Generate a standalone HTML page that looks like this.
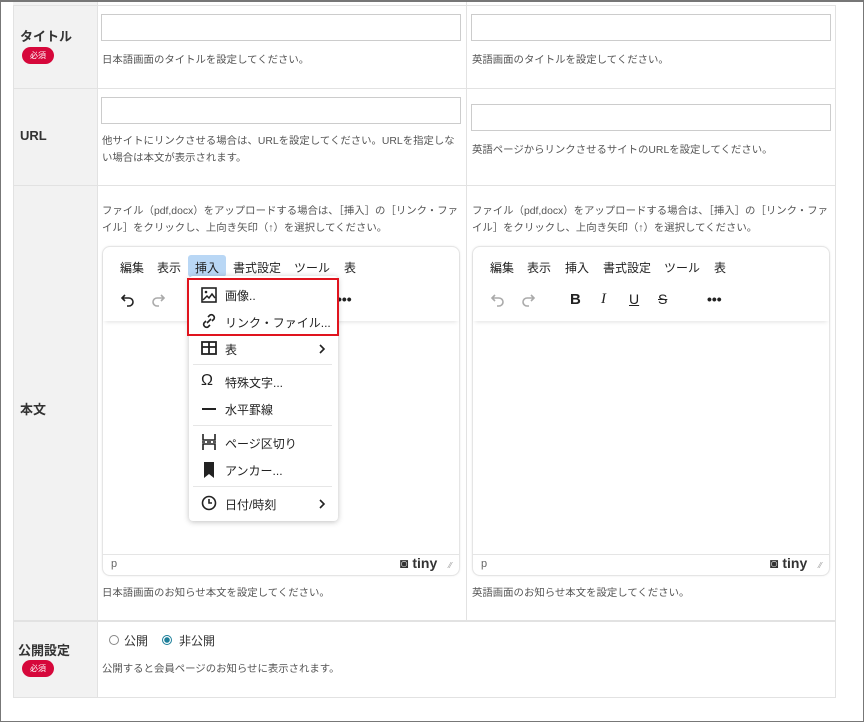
<!DOCTYPE html>
<html><head><meta charset="utf-8"><style>
*{box-sizing:border-box;margin:0;padding:0}
body{width:864px;height:722px;background:#fff;font-family:"Liberation Sans","Noto Sans CJK JP",sans-serif;position:relative;overflow:hidden;color:#333}
.frame{position:absolute;left:0;top:0;width:864px;height:722px;border:1px solid #777;border-top:2px solid #777}
.a{position:absolute}
.lab{background:#f2f2f2}
.hl{position:absolute;height:1px;background:#e2e2e2}
.vl{position:absolute;width:1px;background:#e2e2e2}
.lt{position:absolute;font-size:13px;font-weight:bold;color:#333}
.req{position:absolute;width:32px;height:17px;border-radius:9px;background:#d6083b;color:#fff;font-size:8px;text-align:center;line-height:17px}
.inp{position:absolute;border:1px solid #ccc;background:#fff;height:27px}
.hint{position:absolute;font-size:10.4px;color:#555;line-height:17px}
.ed{position:absolute;border:1px solid #e5e5e5;border-radius:8px;background:#fff;width:358px;height:330px;box-shadow:0 0 2px rgba(0,0,0,.08)}
.menu{position:absolute;top:12px;left:0;font-size:12px;color:#222;white-space:nowrap}
.menu span{position:absolute;top:0}
.tb{position:absolute;left:0;top:0;width:100%;height:74px;box-shadow:0 3px 4px -2px rgba(0,0,0,.12);border-radius:8px 8px 0 0}
.sb{position:absolute;left:0;bottom:0;width:100%;height:21px;border-top:1px solid #e5e5e5;font-size:11px;color:#666}
.dd{position:absolute;left:189px;top:276px;width:149px;height:245px;background:#fff;border-radius:4px;box-shadow:0 1px 6px rgba(0,0,0,.25)}
.it{position:absolute;left:36px;font-size:12px;color:#222}
.sep{position:absolute;left:4px;width:139px;height:1px;background:#e6e6e6}
</style></head><body>
<div class="a lab" style="left:13px;top:5px;width:84px;height:692px"></div>
<div class="hl" style="left:13px;top:5px;width:823px"></div>
<div class="hl" style="left:13px;top:88px;width:823px"></div>
<div class="hl" style="left:13px;top:185px;width:823px"></div>
<div class="hl" style="left:13px;top:620px;width:823px;height:2px"></div>
<div class="hl" style="left:13px;top:697px;width:823px"></div>
<div class="vl" style="left:13px;top:5px;height:693px"></div>
<div class="vl" style="left:97px;top:5px;height:693px"></div>
<div class="vl" style="left:466px;top:5px;height:616px"></div>
<div class="vl" style="left:835px;top:5px;height:693px"></div>
<div class="a" style="left:13px;top:0;width:823px;height:5px;background:#fff"></div>
<div class="a lab" style="left:13px;top:0;width:84px;height:5px"></div>
<div class="vl" style="left:97px;top:0;height:6px"></div><div class="vl" style="left:466px;top:0;height:6px"></div>

<div class="lt" style="left:20px;top:26px">タイトル</div>
<div class="req" style="left:22px;top:47px">必須</div>
<div class="lt" style="left:20px;top:128px">URL</div>
<div class="lt" style="left:20px;top:399px">本文</div>
<div class="lt" style="left:18px;top:640px">公開設定</div>
<div class="req" style="left:22px;top:660px">必須</div>

<div class="inp" style="left:101px;top:14px;width:360px"></div>
<div class="inp" style="left:471px;top:14px;width:360px"></div>
<div class="hint" style="left:102px;top:52px">日本語画面のタイトルを設定してください。</div>
<div class="hint" style="left:472px;top:52px">英語画面のタイトルを設定してください。</div>
<div class="inp" style="left:101px;top:97px;width:360px"></div>
<div class="inp" style="left:471px;top:104px;width:360px"></div>
<div class="hint" style="left:102px;top:133px;width:358px">他サイトにリンクさせる場合は、URLを設定してください。URLを指定しない場合は本文が表示されます。</div>
<div class="hint" style="left:472px;top:142px">英語ページからリンクさせるサイトのURLを設定してください。</div>
<div class="hint" style="left:102px;top:203px;width:360px">ファイル（pdf,docx）をアップロードする場合は、［挿入］の［リンク・ファイル］をクリックし、上向き矢印（↑）を選択してください。</div>
<div class="hint" style="left:472px;top:203px;width:360px">ファイル（pdf,docx）をアップロードする場合は、［挿入］の［リンク・ファイル］をクリックし、上向き矢印（↑）を選択してください。</div>

<div class="ed" style="left:102px;top:246px">
 <div class="tb"></div>
 <div class="a" style="left:85px;top:8px;width:38px;height:22px;background:#b9d7f5;border-radius:3px"></div>
 <div class="menu"><span style="left:17px">編集</span><span style="left:54px">表示</span><span style="left:92px">挿入</span><span style="left:130px">書式設定</span><span style="left:191px">ツール</span><span style="left:241px">表</span></div>
 <svg class="a" style="left:16px;top:44px" width="18" height="18" viewBox="0 0 18 18"><path d="M6 4L3 7l3 3M3 7h7a4 4 0 010 8H8" fill="none" stroke="#222" stroke-width="1.6"/></svg>
 <svg class="a" style="left:46px;top:44px" width="18" height="18" viewBox="0 0 18 18"><path d="M12 4l3 3-3 3M15 7H8a4 4 0 000 8h2" fill="none" stroke="#aaa" stroke-width="1.6"/></svg>
 <div class="a" style="left:234px;top:44px;font-size:14px;font-weight:bold;color:#222">•••</div>
 <div class="sb"><span class="a" style="left:8px;top:3px">p</span><span class="a" style="left:297px;top:0px;font-weight:bold;font-size:14px;color:#333">◙ tiny</span><span class="a" style="left:346px;top:6px;font-size:8px;color:#999">⁄⁄</span></div>
</div>
<div class="ed" style="left:472px;top:246px">
 <div class="tb"></div>
 <div class="menu"><span style="left:17px">編集</span><span style="left:54px">表示</span><span style="left:92px">挿入</span><span style="left:130px">書式設定</span><span style="left:191px">ツール</span><span style="left:241px">表</span></div>
 <svg class="a" style="left:16px;top:44px" width="18" height="18" viewBox="0 0 18 18"><path d="M6 4L3 7l3 3M3 7h7a4 4 0 010 8H8" fill="none" stroke="#aaa" stroke-width="1.6"/></svg>
 <svg class="a" style="left:46px;top:44px" width="18" height="18" viewBox="0 0 18 18"><path d="M12 4l3 3-3 3M15 7H8a4 4 0 000 8h2" fill="none" stroke="#aaa" stroke-width="1.6"/></svg>
 <div class="a" style="left:97px;top:44px;font-size:15px;font-weight:bold;color:#222">B</div>
 <div class="a" style="left:128px;top:44px;font-size:15px;font-style:italic;font-family:'Liberation Serif',serif;color:#222">I</div>
 <div class="a" style="left:156px;top:44px;font-size:14px;text-decoration:underline;color:#222">U</div>
 <div class="a" style="left:185px;top:44px;font-size:14px;text-decoration:line-through;color:#222">S</div>
 <div class="a" style="left:234px;top:44px;font-size:14px;font-weight:bold;color:#222">•••</div>
 <div class="sb"><span class="a" style="left:8px;top:3px">p</span><span class="a" style="left:297px;top:0px;font-weight:bold;font-size:14px;color:#333">◙ tiny</span><span class="a" style="left:346px;top:6px;font-size:8px;color:#999">⁄⁄</span></div>
</div>

<div class="dd">
 <svg class="a" style="left:12px;top:11px" width="16" height="16" viewBox="0 0 16 16"><rect x="1" y="1" width="14" height="14" fill="none" stroke="#222" stroke-width="1.6"/><circle cx="5" cy="5" r="1.3" fill="#222"/><path d="M2 13l4-4 2 2 3-4 3 4" fill="none" stroke="#222" stroke-width="1.5"/></svg>
 <div class="it" style="top:11px">画像..</div>
 <svg class="a" style="left:12px;top:37px" width="16" height="16" viewBox="0 0 16 16"><path d="M7 4l2-2a3 3 0 014 4l-2 2M9 12l-2 2a3 3 0 01-4-4l2-2M6 10l4-4" fill="none" stroke="#222" stroke-width="1.6"/></svg>
 <div class="it" style="top:38px">リンク・ファイル...</div>
 <svg class="a" style="left:12px;top:65px" width="16" height="14" viewBox="0 0 16 14"><rect x="1" y="1" width="14" height="12" fill="none" stroke="#222" stroke-width="1.8"/><path d="M1 6h14M8 1v12" stroke="#222" stroke-width="1.8"/></svg>
 <div class="it" style="top:65px">表</div>
 <svg class="a" style="left:129px;top:68px" width="8" height="10" viewBox="0 0 8 10"><path d="M2 1l4 4-4 4" fill="none" stroke="#222" stroke-width="1.6"/></svg>
 <div class="sep" style="top:88px"></div>
 <div class="a" style="left:12px;top:96px;font-size:16px;color:#222">Ω</div>
 <div class="it" style="top:98px">特殊文字...</div>
 <div class="a" style="left:13px;top:132px;width:14px;height:2px;background:#222"></div>
 <div class="it" style="top:125px">水平罫線</div>
 <div class="sep" style="top:149px"></div>
 <svg class="a" style="left:13px;top:158px" width="14" height="16" viewBox="0 0 14 16"><path d="M1 0v6h12V0M1 16v-6h12v6M0 8h3M5 8h4M11 8h3" fill="none" stroke="#222" stroke-width="1.6"/></svg>
 <div class="it" style="top:159px">ページ区切り</div>
 <svg class="a" style="left:14px;top:186px" width="12" height="16" viewBox="0 0 12 16"><path d="M1 0h10v16l-5-4-5 4z" fill="#222"/></svg>
 <div class="it" style="top:186px">アンカー...</div>
 <div class="sep" style="top:210px"></div>
 <svg class="a" style="left:12px;top:219px" width="16" height="16" viewBox="0 0 16 16"><circle cx="8" cy="8" r="6.5" fill="none" stroke="#222" stroke-width="1.6"/><path d="M8 4v4h3" fill="none" stroke="#222" stroke-width="1.6"/></svg>
 <div class="it" style="top:220px">日付/時刻</div>
 <svg class="a" style="left:129px;top:223px" width="8" height="10" viewBox="0 0 8 10"><path d="M2 1l4 4-4 4" fill="none" stroke="#222" stroke-width="1.6"/></svg>
</div>
<div class="a" style="left:187px;top:278px;width:152px;height:58px;border:2px solid #e0141e"></div>

<div class="hint" style="left:102px;top:585px">日本語画面のお知らせ本文を設定してください。</div>
<div class="hint" style="left:472px;top:585px">英語画面のお知らせ本文を設定してください。</div>

<div class="a" style="left:109px;top:635px;width:10px;height:10px;border:1px solid #888;border-radius:50%"></div>
<div class="a" style="left:124px;top:632px;font-size:12px;color:#333">公開</div>
<div class="a" style="left:162px;top:635px;width:10px;height:10px;border:1px solid #1d7f9a;border-radius:50%;background:radial-gradient(#1d7f9a 0 2.5px,#fff 3px)"></div>
<div class="a" style="left:179px;top:632px;font-size:12px;color:#333">非公開</div>
<div class="hint" style="left:102px;top:661px">公開すると会員ページのお知らせに表示されます。</div>
<div class="frame"></div>
</body></html>
